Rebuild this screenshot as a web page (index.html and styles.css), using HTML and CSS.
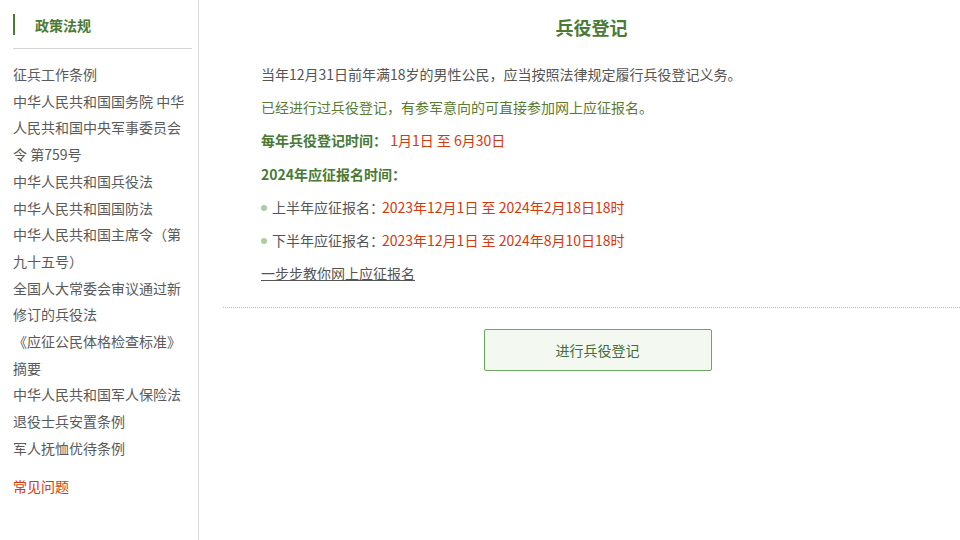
FILE: index.html
```html
<!DOCTYPE html>
<html lang="zh-CN">
<head>
<meta charset="utf-8">
<title>兵役登记</title>
<link rel="stylesheet" href="styles.css">
</head>
<body>
<div class="page">
  <aside class="sidebar">
    <div class="side-head"><span class="side-title">政策法规</span></div>
    <ul class="side-links">
      <li><a href="#">征兵工作条例</a></li>
      <li><a href="#">中华人民共和国国务院 中华人民共和国中央军事委员会令 第759号</a></li>
      <li><a href="#">中华人民共和国兵役法</a></li>
      <li><a href="#">中华人民共和国国防法</a></li>
      <li><a href="#">中华人民共和国主席令（第九十五号）</a></li>
      <li><a href="#">全国人大常委会审议通过新修订的兵役法</a></li>
      <li><a href="#">《应征公民体格检查标准》摘要</a></li>
      <li><a href="#">中华人民共和国军人保险法</a></li>
      <li><a href="#">退役士兵安置条例</a></li>
      <li><a href="#">军人抚恤优待条例</a></li>
    </ul>
    <a class="faq" href="#">常见问题</a>
  </aside>
  <main class="main">
    <h1 class="title">兵役登记</h1>
    <div class="content">
      <p class="line">当年12月31日前年满18岁的男性公民，应当按照法律规定履行兵役登记义务。</p>
      <p class="line green">已经进行过兵役登记，有参军意向的可直接参加网上应征报名。</p>
      <p class="line"><b class="label">每年兵役登记时间：</b> <span class="red">1月1日 至 6月30日</span></p>
      <p class="line"><b class="label">2024年应征报名时间：</b></p>
      <p class="line bullet">上半年应征报名：<span class="red">2023年12月1日 至 2024年2月18日18时</span></p>
      <p class="line bullet">下半年应征报名：<span class="red">2023年12月1日 至 2024年8月10日18时</span></p>
      <p class="line"><a class="guide" href="#">一步步教你网上应征报名</a></p>
    </div>
    <div class="actions">
      <a class="btn" href="#">进行兵役登记</a>
    </div>
  </main>
</div>
</body>
</html>
```

FILE: styles.css
```css
html, body {
  margin: 0;
  padding: 0;
  background: #fff;
}
body {
  font-family: "Noto Sans CJK SC", "Noto Sans", sans-serif;
  font-size: 14px;
  color: #555;
}
a { text-decoration: none; }
.page {
  display: flex;
  min-height: 540px;
}
.sidebar {
  width: 179px;
  flex: none;
  padding: 14px 6px 0 13px;
  border-right: 1px solid #d9d9d9;
}
.side-head {
  border-left: 2px solid #4a7a36;
  height: 21px;
  display: flex;
  align-items: center;
  padding-left: 20px;
  margin-bottom: 13px;
}
.side-title {
  font-weight: bold;
  color: #4a7a36;
  font-size: 14px;
}
.side-links {
  list-style: none;
  margin: 0;
  padding: 12px 0 0;
  border-top: 1px solid #d4d4d4;
}
.side-links li {
  line-height: 26.7px;
}
.side-links a {
  color: #5a5a5a;
}
.faq {
  display: block;
  margin-top: 11px;
  line-height: 27px;
  color: #d4380d;
}
.main {
  flex: 1;
  padding-left: 24px;
}
.title {
  margin: 10px 0 0;
  text-align: center;
  font-size: 18px;
  line-height: 34px;
  font-weight: bold;
  color: #4a7a36;
}
.content {
  padding: 14px 0 17px 38px;
  border-bottom: 1px dotted #bbb;
}
.line {
  margin: 0;
  line-height: 33.2px;
}
.green { color: #5b7b30; }
.label { color: #4a7a36; }
.red { color: #d4380d; }
.bullet::before {
  content: "";
  display: inline-block;
  vertical-align: middle;
  width: 6px;
  height: 6px;
  margin: -2px 5px 0 0;
  border-radius: 50%;
  background: #a9d09c;
}
.bullet .red {
  margin-left: -2px;
}
.guide {
  color: #555;
  text-decoration: underline;
}
.actions {
  display: flex;
  justify-content: center;
  padding: 21px 0 0 12px;
}
.btn {
  width: 226px;
  height: 40px;
  display: flex;
  align-items: center;
  justify-content: center;
  border: 1px solid #6aa862;
  border-radius: 2px;
  background: #f3f8f0;
  color: #3f6e3a;
}
```
